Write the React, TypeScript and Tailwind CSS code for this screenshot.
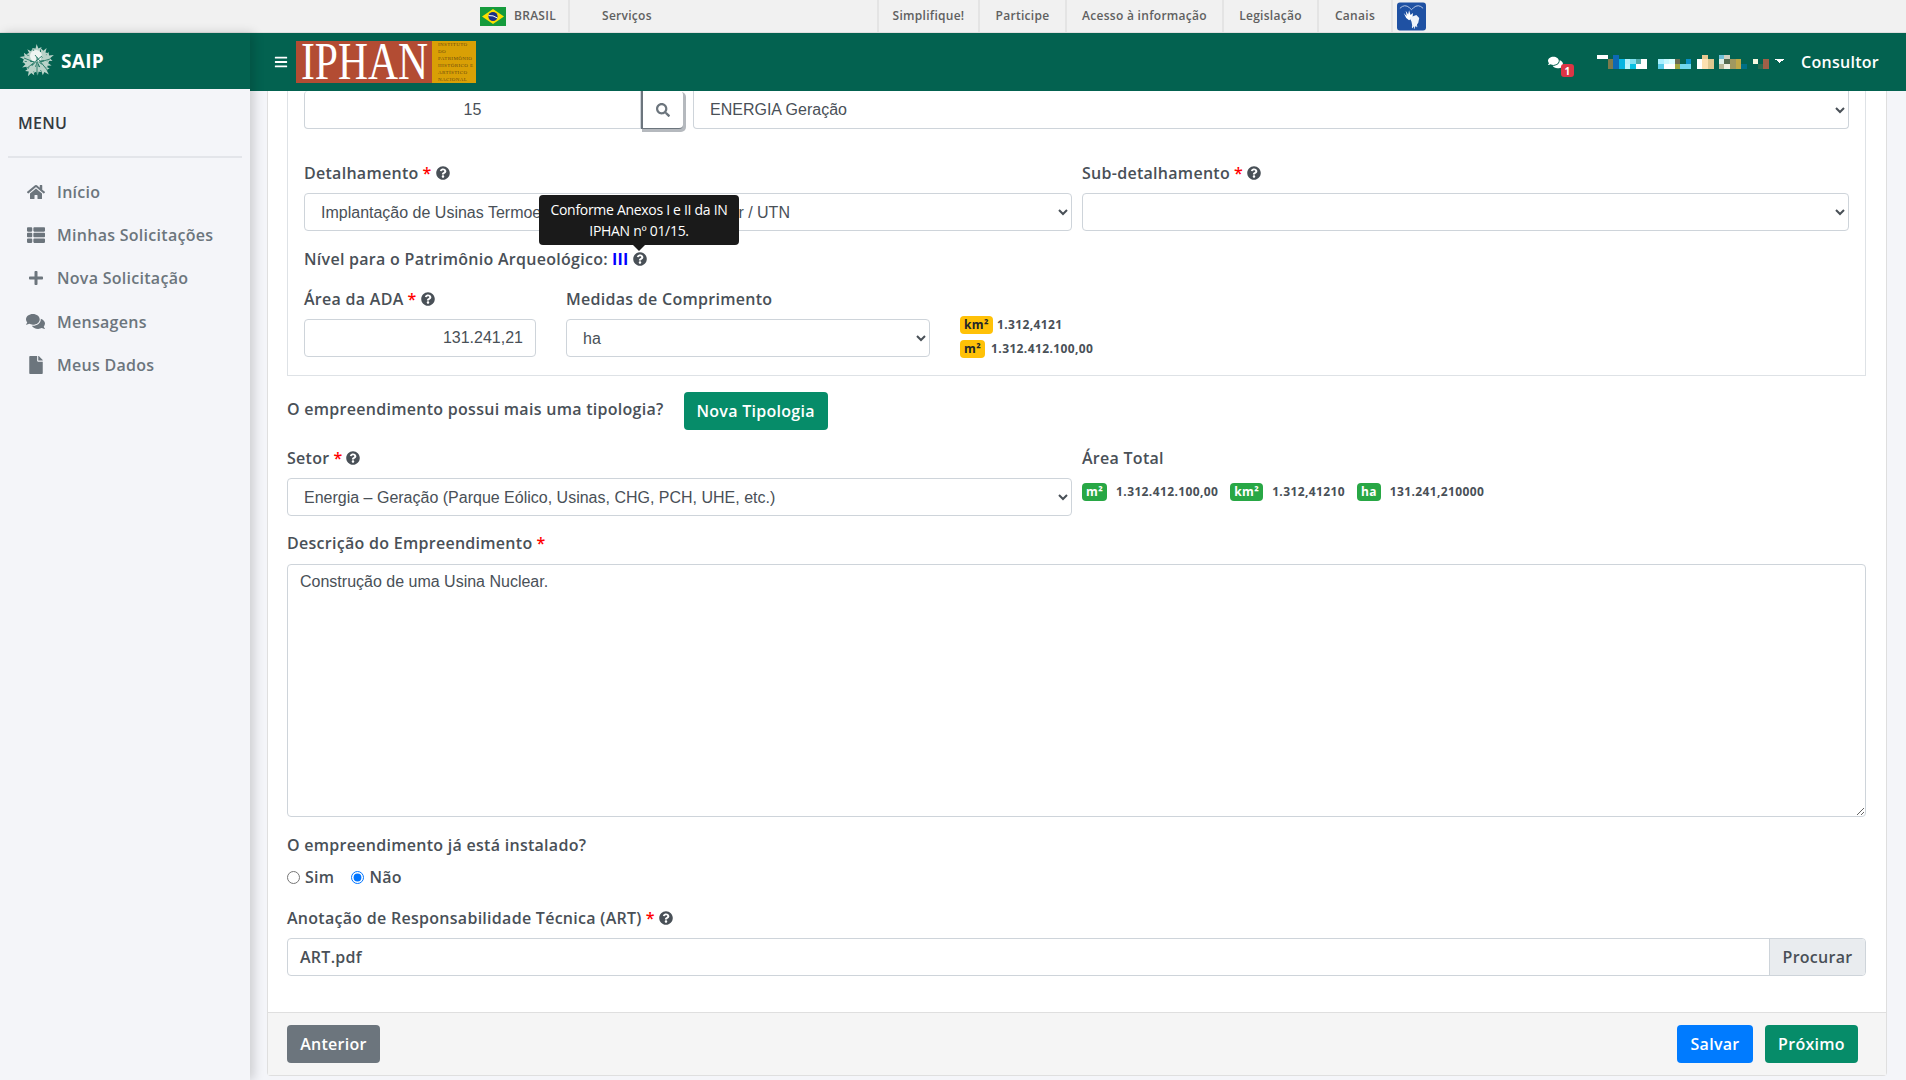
import {
  FaBars,
  FaComments,
  FaFile,
  FaHome,
  FaPlus,
  FaQuestionCircle,
  FaSearch,
  FaThList,
} from "react-icons/fa";

const font = "font-['Open_Sans','Noto_Sans',sans-serif] tracking-[0.28px]";
const inputFont = "font-['Liberation_Sans',Arial,sans-serif] tracking-normal";
const fieldClass = `h-[38px] rounded-[4px] border border-[#ced4da] bg-white px-3 text-base text-[#495057] ${inputFont}`;

function Help() {
  return <FaQuestionCircle className="inline-block text-[14px] text-[#495057]" />;
}

function Label({
  text,
  required,
  help,
  className = "",
}: {
  text: string;
  required?: boolean;
  help?: boolean;
  className?: string;
}) {
  return (
    <div className={`flex h-6 items-center gap-1 text-base leading-6 font-semibold text-[#495057] ${className}`}>
      <span>{text}</span>
      {required && <span className="text-[#ff0000]">*</span>}
      {help && <Help />}
    </div>
  );
}

function Select({ value, className = "" }: { value: string; className?: string }) {
  return (
    <select defaultValue={value} className={`${fieldClass} ${className}`}>
      <option>{value}</option>
    </select>
  );
}

function Badge({ text, color }: { text: React.ReactNode; color: string }) {
  return (
    <span className={`inline-flex h-[18px] items-center justify-center rounded-[4px] px-1 text-xs font-bold ${color}`}>
      {text}
    </span>
  );
}

function TopBar() {
  const links = [
    { text: "Simplifique!", w: "w-[101px]" },
    { text: "Participe", w: "w-[87px]" },
    { text: "Acesso à informação", w: "w-[157px]" },
    { text: "Legislação", w: "w-[95px]" },
    { text: "Canais", w: "w-[74px]" },
  ];
  return (
    <div className="flex h-[33px] items-center border-b border-[#dfdfdf] bg-[#f1f1f1] pl-[480px] text-xs font-semibold text-[#606060]">
      <svg width="26" height="19" viewBox="0 0 26 19">
        <rect width="26" height="19" fill="#159b3c" />
        <polygon points="13,2 24,9.5 13,17 2,9.5" fill="#fedf00" />
        <circle cx="13" cy="9.5" r="4.6" fill="#1c2f86" />
        <path d="M8.6 8.6 Q13 8 17.4 11" stroke="#fff" strokeWidth="1" fill="none" />
      </svg>
      <span className="ml-2 w-[54px]">BRASIL</span>
      <div className="h-full w-[309px] border-l-2 border-[#e4e4e4] pl-[32px] leading-[32px]">Serviços</div>
      {links.map((link) => (
        <div key={link.text} className={`h-full ${link.w} border-l-2 border-[#e4e4e4] text-center leading-[32px]`}>
          {link.text}
        </div>
      ))}
      <div className="h-full border-l-2 border-[#e4e4e4] pt-[2px] pl-[4px]">
        <svg width="29" height="29" viewBox="0 0 30 29">
          <rect width="30" height="29" rx="3" fill="#1f51a3" />
          <path d="M3 6 Q8 1 13 5.5 L15 7.5 L17 5.5 Q22 1 27 6" stroke="#c9d6ee" strokeWidth="0.9" fill="none" />
          <path d="M7 11 L10 14 L9 8.5 L11.5 12.5 L12.5 8 L14 13 L16.5 11 L16 16 L12.5 18.5 L9.5 16 Z" fill="#fff" />
          <path d="M13 15.5 L20 13 L23 16 L22 21 L19 25 L16 25 L15 20 Z" fill="#eef2fa" />
          <path d="M16 24 L16 26.5 M18 24 L18 27 M20 22 L20.5 25.5" stroke="#fff" strokeWidth="0.9" />
        </svg>
      </div>
    </div>
  );
}

function LeafLogo() {
  const spikes: [number, number][] = [
    [0, 1], [38, 0.95], [72, 1.05], [108, 0.9], [140, 1.05],
    [178, 0.85], [212, 1.05], [248, 0.95], [284, 1.05], [322, 0.9],
  ];
  return (
    <svg width="36" height="36" viewBox="-18 -18 36 36">
      {spikes.map(([a, s]) => (
        <g key={a} transform={`rotate(${a}) scale(${s})`}>
          <path d="M0 0 L-1.8 -7 L-4.5 -7.5 L-2.4 -10 L-5 -13 L-1.4 -12.6 L-0.4 -17 L1.4 -12.6 L4.6 -14 L2.8 -9.6 L4.6 -7 L1.5 -6.6 Z" fill="#b9d3c9" />
        </g>
      ))}
      <circle cx="-1" cy="-5" r="6" fill="#eef5f2" />
      <path d="M-11 8 L5 -5 M11 10 L-2 -6 M0 14 L0 -4 M-13 -3 L-3 1 M13 -2 L3 1" stroke="#1f7763" strokeWidth="0.9" />
    </svg>
  );
}

function Sidebar() {
  const items = [
    { icon: <FaHome className="text-[18px]" />, text: "Início" },
    { icon: <FaThList className="text-[18px]" />, text: "Minhas Solicitações" },
    { icon: <FaPlus className="text-[16px]" />, text: "Nova Solicitação" },
    { icon: <FaComments className="text-[19px]" />, text: "Mensagens" },
    { icon: <FaFile className="text-[18px]" />, text: "Meus Dados" },
  ];
  return (
    <aside className="relative z-20 w-[250px] shrink-0 bg-[#f4f5f9] shadow-[4px_0_10px_rgba(0,0,0,0.16)]">
      <div className="flex h-[56px] items-center gap-[6px] bg-[#036250] pl-[19px] text-[19px] font-bold text-white">
        <LeafLogo />
        <span>SAIP</span>
      </div>
      <div className="mt-[22px] pl-[18px] text-base leading-6 font-semibold text-[#343a40]">MENU</div>
      <div className="mx-2 mt-[21px] border-t-2 border-[#e3e5ea]" />
      <nav className="mt-[12px] flex flex-col">
        {items.map((item) => (
          <div key={item.text} className="flex h-[43.3px] items-center text-base font-semibold text-[#6c757d]">
            <span className="flex w-[57px] justify-center pr-[8px] pl-[22px]">{item.icon}</span>
            <span>{item.text}</span>
          </div>
        ))}
      </nav>
    </aside>
  );
}

function BlurredName() {
  const cells: [number, number, number, number, string][] = [
    [171, 30, 33, 12, "#ffffff"], [220, 30, 18, 42, "#0d69b5"], [204, 42, 16, 30, "#7d7a4c"],
    [238, 42, 16, 30, "#05b5e0"], [254, 42, 16, 15, "#b0f0fa"], [254, 57, 16, 15, "#b8f4fb"],
    [270, 42, 18, 15, "#7fe0f0"], [270, 57, 18, 15, "#08c0e0"], [288, 42, 16, 15, "#4fa8a8"],
    [288, 57, 33, 15, "#ffffff"], [304, 42, 17, 15, "#ffffff"], [354, 42, 17, 15, "#aaf0ff"],
    [354, 57, 17, 15, "#58cce8"], [371, 42, 17, 15, "#c8f8ff"], [371, 57, 34, 15, "#ffffff"],
    [388, 42, 17, 15, "#d8ffff"], [405, 42, 16, 15, "#6b6b50"], [405, 57, 16, 15, "#a0a840"],
    [421, 57, 17, 15, "#70d8f0"], [438, 42, 17, 15, "#0a90c8"], [438, 57, 17, 15, "#70d8f0"],
    [472, 42, 16, 30, "#ffffff"], [488, 30, 17, 12, "#e8c890"], [488, 42, 17, 30, "#fde0b0"],
    [505, 42, 17, 30, "#e0c890"], [537, 30, 17, 12, "#6fc0d8"], [537, 42, 17, 15, "#e0f0e8"],
    [537, 57, 17, 15, "#b8b898"], [554, 30, 17, 12, "#d0d0c0"], [554, 42, 17, 15, "#556b50"],
    [554, 57, 17, 15, "#f0f0e0"], [571, 42, 17, 30, "#a09860"], [588, 42, 17, 30, "#c0a848"],
    [605, 57, 16, 15, "#006f85"], [640, 42, 14, 15, "#f8f8e0"], [654, 57, 17, 15, "#2d6b50"],
    [671, 42, 17, 30, "#a06048"],
  ];
  return (
    <svg width="188" height="14" viewBox="171 30 565 42" shapeRendering="crispEdges">
      {cells.map(([x, y, w, h, fill]) => (
        <rect key={`${x}-${y}`} x={x} y={y} width={w} height={h} fill={fill} />
      ))}
      <polygon points="706,43 735,43 720,53" fill="#ffffff" />
    </svg>
  );
}

function Header() {
  return (
    <header className="relative z-10 flex h-[58px] shrink-0 items-center bg-[#036250] pl-[24px] text-white">
      <FaBars className="text-[14px]" />
      <div className="ml-[8px] flex h-[42px] w-[180px]">
        <div className="flex w-[136px] items-center justify-center bg-[#b34c33] font-['Liberation_Serif',serif] text-[52px] leading-none tracking-normal">
          <span className="inline-block scale-x-[0.8] whitespace-nowrap">IPHAN</span>
        </div>
        <div className="flex w-[44px] flex-col justify-center bg-[#d9a005] pl-[6px] font-['Liberation_Serif',serif] text-[5px] leading-[7px] tracking-[0.4px] text-[#6a4a10] uppercase">
          <span>Instituto do</span>
          <span>Patrimônio</span>
          <span>Histórico e</span>
          <span>Artístico</span>
          <span>Nacional</span>
        </div>
      </div>
      <div className="ml-auto flex items-center">
        <div className="relative mr-[23px] h-[20px] w-[26px]">
          <FaComments className="absolute top-[3px] left-0 text-[15px]" />
          <span className="absolute top-[12px] left-[13px] flex h-[13px] w-[13px] items-center justify-center rounded-[3px] bg-[#dc3545] text-[10px] leading-none font-bold text-white">
            1
          </span>
        </div>
        <BlurredName />
        <span className="mr-[27px] ml-[16px] text-base font-semibold">Consultor</span>
      </div>
    </header>
  );
}

function Tipologia() {
  return (
    <div className="relative border-x border-b border-[#dee2e6] px-[16px] pb-[17px]">
      <div className="flex h-[38px] items-stretch">
        <input
          defaultValue="15"
          className={`${fieldClass} w-[337px] rounded-r-none border-t-0 text-center`}
        />
        <button className="z-10 flex w-[42px] items-center justify-center rounded-r-[4px] border-b border-l-2 border-[#6c757d] bg-white text-[#6c757d] shadow-[2px_2px_0_1px_#b5b9be]">
          <FaSearch className="text-[14px]" />
        </button>
        <Select value="ENERGIA Geração" className="ml-[10px] flex-1 rounded-t-none border-t-0" />
      </div>

      <div className="mt-[32px] flex gap-[10px]">
        <div className="w-[768px]">
          <Label text="Detalhamento" required help />
          <Select value="Implantação de Usinas Termoelétrica / UTE e Termonuclear / UTN" className="mt-2 w-full" />
        </div>
        <div className="flex-1">
          <Label text="Sub-detalhamento" required help />
          <Select value="" className="mt-2 w-full" />
        </div>
      </div>

      <div className="mt-4 flex h-6 items-center gap-1 text-base font-semibold text-[#495057]">
        <span>Nível para o Patrimônio Arqueológico:</span>
        <span className="font-bold text-[#0000ff]">III</span>
        <Help />
      </div>

      <div className="mt-4 flex">
        <div className="w-[232px]">
          <Label text="Área da ADA" required help />
          <input defaultValue="131.241,21" className={`${fieldClass} mt-2 w-full text-right`} />
        </div>
        <div className="ml-[30px] w-[364px]">
          <Label text="Medidas de Comprimento" />
          <Select value="ha" className="mt-2 w-full" />
        </div>
        <div className="mt-[29px] ml-[30px] flex flex-col gap-[6px] text-xs font-bold tracking-[0.38px] text-[#495057]">
          <div className="flex items-center gap-1">
            <Badge text="km²" color="bg-[#ffc107] text-[#212529]" />
            <span>1.312,4121</span>
          </div>
          <div className="flex items-center gap-[6px]">
            <Badge text="m²" color="bg-[#ffc107] text-[#212529]" />
            <span>1.312.412.100,00</span>
          </div>
        </div>
      </div>

      <div className="absolute top-[104px] left-[251px] z-20 w-[200px]">
        <div className="rounded-[4px] bg-[#1a1a1a] py-[4px] text-center text-[14px] leading-[21px] tracking-[-0.3px] text-white">
          Conforme Anexos I e II da IN
          <br />
          IPHAN nº 01/15.
        </div>
        <div className="mx-auto h-0 w-0 border-x-[6px] border-t-[6px] border-x-transparent border-t-[#1a1a1a]" />
      </div>
    </div>
  );
}

function AreaTotal() {
  return (
    <div className="flex-1">
      <Label text="Área Total" />
      <div className="mt-[13px] flex items-center text-xs font-bold tracking-[0.38px] text-[#495057]">
        <Badge text="m²" color="bg-[#28a745] text-white" />
        <span className="ml-[9px]">1.312.412.100,00</span>
        <span className="ml-3"><Badge text="km²" color="bg-[#28a745] text-white" /></span>
        <span className="ml-[9px]">1.312,41210</span>
        <span className="ml-3"><Badge text="ha" color="bg-[#28a745] text-white" /></span>
        <span className="ml-[9px]">131.241,210000</span>
      </div>
    </div>
  );
}

export default function App() {
  return (
    <div className={`flex h-[1080px] flex-col overflow-hidden bg-[#f4f5f9] ${font}`}>
      <TopBar />
      <div className="flex flex-1">
        <Sidebar />
        <div className="flex min-w-0 flex-1 flex-col">
          <Header />
          <main className="mr-[19px] ml-[17px] flex h-[985px] flex-col rounded-b-[4px] border-x border-b border-[#dfdfdf] bg-white">
            <div className="flex-1 pr-[20px] pl-[19px]">
              <Tipologia />

              <div className="mt-[16px] flex h-[38px] items-center">
                <span className="-translate-y-[2px] text-base font-semibold text-[#495057]">O empreendimento possui mais uma tipologia?</span>
                <button className="ml-[20px] h-[38px] w-[144px] rounded-[4px] bg-[#068c69] text-base font-semibold text-white">
                  Nova Tipologia
                </button>
              </div>

              <div className="mt-[16px] flex gap-[10px]">
                <div className="w-[785px]">
                  <Label text="Setor" required help />
                  <Select value="Energia – Geração (Parque Eólico, Usinas, CHG, PCH, UHE, etc.)" className="mt-[8px] w-full" />
                </div>
                <AreaTotal />
              </div>

              <Label text="Descrição do Empreendimento" required className="mt-[15px]" />
              <textarea
                defaultValue="Construção de uma Usina Nuclear."
                className={`mt-[9px] block h-[253px] w-full rounded-[4px] border border-[#ced4da] bg-white px-3 py-[5px] text-[16px] leading-6 text-[#495057] ${inputFont}`}
              />

              <Label text="O empreendimento já está instalado?" className="mt-[16px]" />
              <div className="mt-2 flex h-6 items-center text-base font-semibold text-[#495057]">
                <input type="radio" name="instalado" />
                <span className="ml-[5px]">Sim</span>
                <input type="radio" name="instalado" defaultChecked className="ml-[17px]" />
                <span className="ml-[5px]">Não</span>
              </div>

              <Label text="Anotação de Responsabilidade Técnica (ART)" required help className="mt-[17px]" />
              <div className="mt-2 flex h-[38px] items-center overflow-hidden rounded-[4px] border border-[#ced4da] text-base font-semibold text-[#495057]">
                <span className="flex-1 pl-3">ART.pdf</span>
                <span className="flex h-full w-[96px] items-center justify-center border-l border-[#ced4da] bg-[#e9ecef]">
                  Procurar
                </span>
              </div>
            </div>

            <footer className="flex h-[63px] items-center gap-3 border-t border-[#dfdfdf] bg-[#f5f5f5] pr-[28px] pl-[19px] text-base font-semibold text-white">
              <button className="h-[38px] w-[93px] rounded-[4px] bg-[#6c757d]">Anterior</button>
              <button className="ml-auto h-[38px] w-[76px] rounded-[4px] bg-[#007bff]">Salvar</button>
              <button className="h-[38px] w-[93px] rounded-[4px] bg-[#068c69]">Próximo</button>
            </footer>
          </main>
        </div>
      </div>
    </div>
  );
}
